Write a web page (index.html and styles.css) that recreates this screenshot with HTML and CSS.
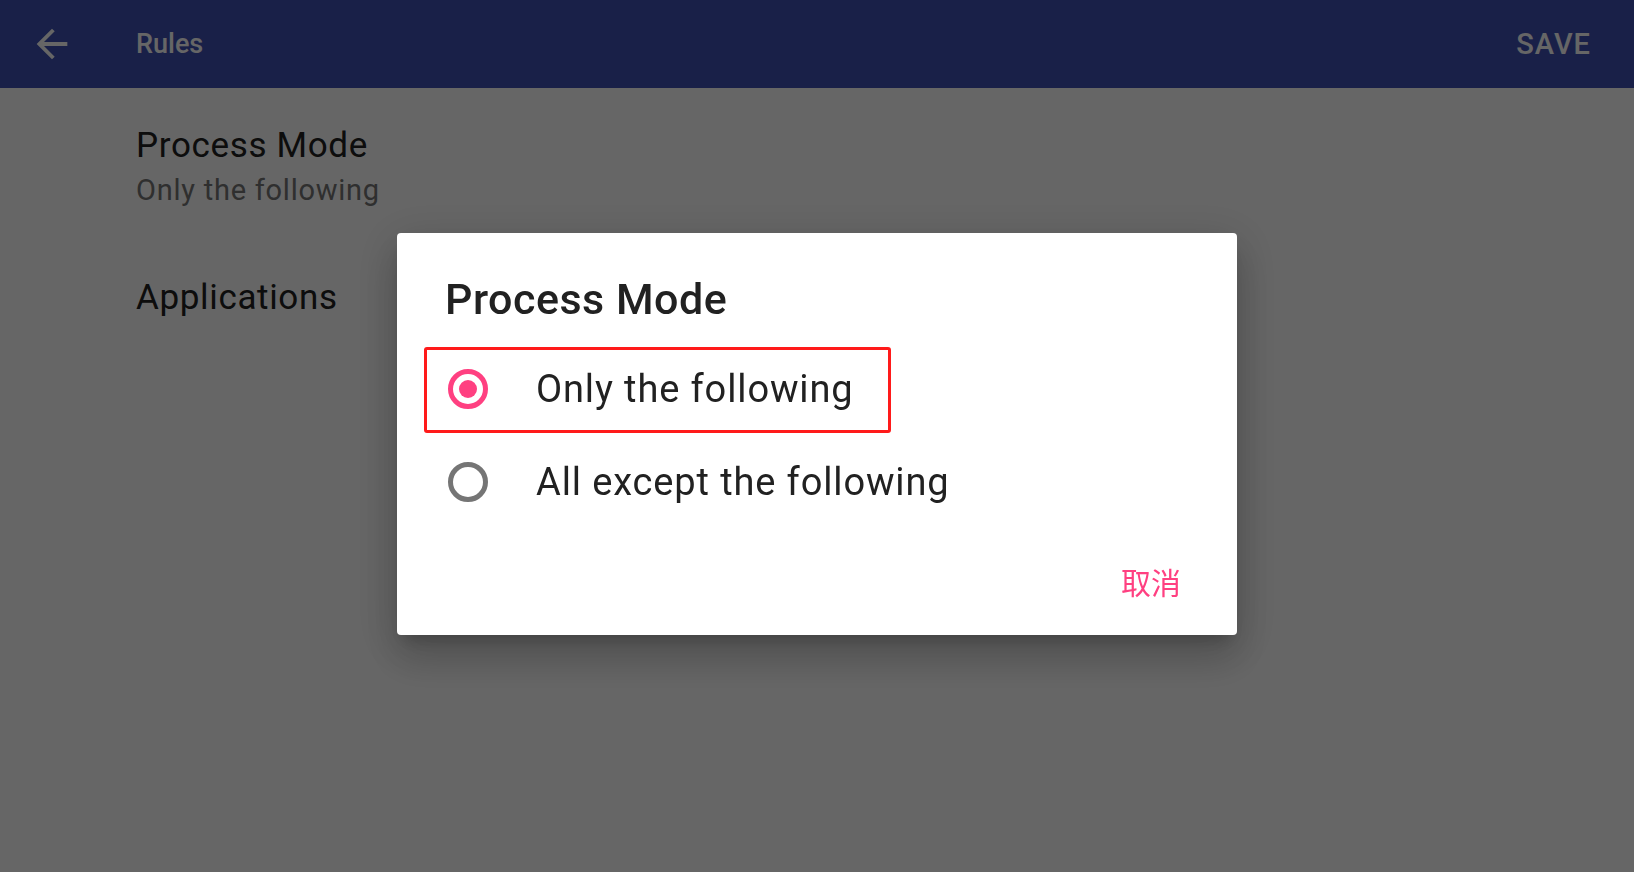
FILE: index.html
```html
<!DOCTYPE html>
<html lang="en">
<head>
<meta charset="utf-8">
<title>Rules</title>
<link rel="stylesheet" href="styles.css">
</head>
<body>
<header class="appbar">
  <button class="back" aria-label="Back">
    <svg viewBox="0 0 24 24" width="46" height="46"><path fill="#fff" d="M20 11H7.83l5.59-5.59L12 4l-8 8 8 8 1.41-1.41L7.83 13H20v-2z"/></svg>
  </button>
  <div class="appbar-title">Rules</div>
  <div class="spacer"></div>
  <div class="action">SAVE</div>
</header>
<main class="content">
  <div class="pref pref-two">
    <div class="pref-title">Process Mode</div>
    <div class="pref-summary">Only the following</div>
  </div>
  <div class="pref pref-one">
    <div class="pref-title">Applications</div>
  </div>
</main>
<div class="scrim">
  <div class="dialog">
    <div class="dialog-title">Process Mode</div>
    <div class="options">
      <div class="option">
        <span class="radio checked"><span class="dot"></span></span>
        <span class="option-label">Only the following</span>
        <span class="highlight"></span>
      </div>
      <div class="option">
        <span class="radio"></span>
        <span class="option-label">All except the following</span>
      </div>
    </div>
    <div class="actions">
      <span class="btn">取消</span>
    </div>
  </div>
</div>
</body>
</html>
```
FILE: styles.css
```css
html, body {
  margin: 0;
  padding: 0;
}
body {
  width: 1634px;
  height: 872px;
  overflow: hidden;
  background: #ffffff;
  font-family: Roboto, "Noto Sans", "Noto Sans CJK SC", sans-serif;
  color: #212121;
}
.appbar {
  height: 88px;
  background: #3f51b5;
  display: flex;
  align-items: center;
  padding: 0 43px 0 29px;
  box-sizing: border-box;
  color: #ffffff;
}
.back {
  width: 46px;
  height: 46px;
  padding: 0;
  border: 0;
  background: none;
  display: flex;
}
.appbar-title {
  margin-left: 61px;
  font-size: 27px;
  font-weight: 500;
}
.spacer {
  flex: 1;
}
.action {
  font-size: 29px;
  font-weight: 500;
  letter-spacing: 1px;
}
.content {
  padding-left: 136px;
}
.pref-two {
  padding-top: 37px;
  padding-bottom: 34px;
}
.pref-one {
  padding-top: 35px;
}
.pref-title {
  font-size: 35px;
  line-height: 42px;
  letter-spacing: 0.65px;
  color: #212121;
}
.pref-summary {
  margin-top: 5px;
  font-size: 29px;
  line-height: 36px;
  letter-spacing: 0.75px;
  color: #757575;
}
.scrim {
  position: fixed;
  inset: 0;
  background: rgba(0, 0, 0, 0.6);
  display: flex;
  align-items: center;
  justify-content: center;
}
.dialog {
  width: 840px;
  height: 402px;
  margin-bottom: 4px;
  background: #ffffff;
  border-radius: 4px;
  box-sizing: border-box;
  padding-top: 40px;
  padding-bottom: 17px;
  display: flex;
  flex-direction: column;
  box-shadow: 0 11px 15px -7px rgba(0,0,0,.2), 0 24px 38px 3px rgba(0,0,0,.14), 0 9px 46px 8px rgba(0,0,0,.12);
}
.dialog-title {
  padding-left: 48px;
  font-size: 43px;
  line-height: 52px;
  font-weight: 500;
  letter-spacing: 0.5px;
  color: #212121;
}
.options {
  margin-top: 17px;
}
.option {
  position: relative;
  height: 93px;
  display: flex;
  align-items: center;
}
.radio {
  margin-left: 51px;
  width: 40px;
  height: 40px;
  box-sizing: border-box;
  border: 5px solid #757575;
  border-radius: 50%;
  display: flex;
  align-items: center;
  justify-content: center;
}
.radio.checked {
  border-color: #ff4081;
}
.dot {
  width: 18px;
  height: 18px;
  border-radius: 50%;
  background: #ff4081;
}
.option-label {
  margin-left: 48px;
  font-size: 38px;
  letter-spacing: 0.87px;
  color: #212121;
}
.highlight {
  position: absolute;
  left: 27px;
  top: 5px;
  width: 467px;
  height: 86px;
  box-sizing: border-box;
  border: 3px solid #ff1a1a;
  border-radius: 3px;
}
.actions {
  margin-top: 17px;
  height: 72px;
  display: flex;
  justify-content: flex-end;
  align-items: center;
  padding-right: 40px;
}
.btn {
  padding: 0 16px;
  font-family: "Noto Sans CJK SC", sans-serif;
  font-size: 30px;
  color: #ff4081;
}
```
